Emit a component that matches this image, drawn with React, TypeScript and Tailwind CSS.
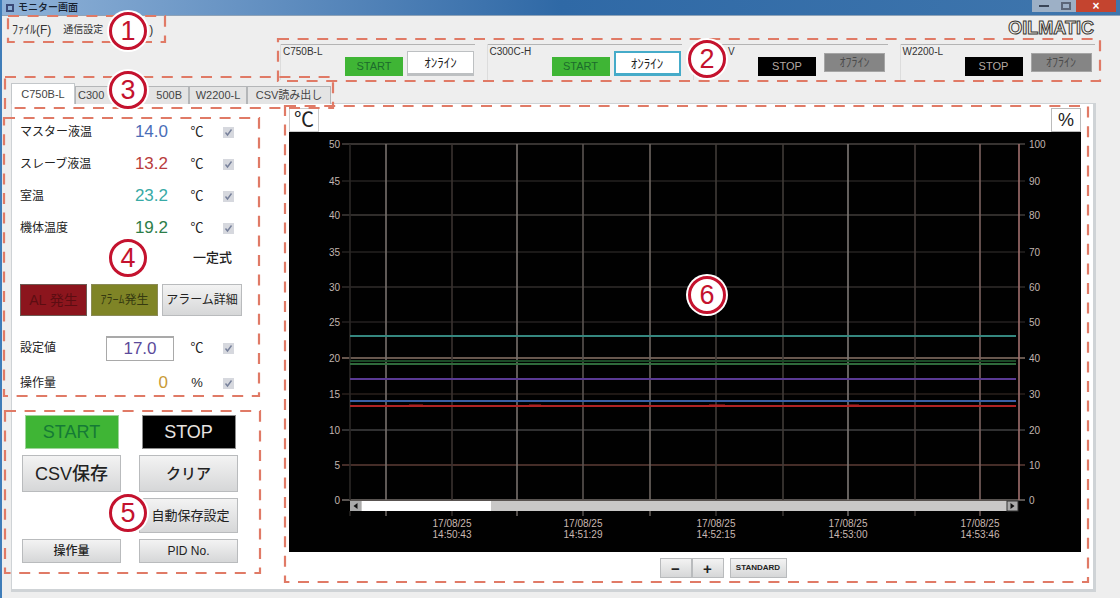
import type { ReactNode } from "react";

function Outline({ className, color = "#e07a66" }: { className: string; color?: string }) {
  return (
    <svg aria-hidden="true" className={`pointer-events-none absolute z-10 overflow-visible ${className}`}>
      <rect width="100%" height="100%" fill="none" stroke={color} strokeWidth="2.2" strokeDasharray="11 8.6" />
    </svg>
  );
}

function Badge({ n, className }: { n: number; className: string }) {
  return (
    <span
      className={`absolute z-20 flex size-[38px] items-center justify-center rounded-full border-[3px] border-[#c4122e] bg-white text-[27px] leading-none text-[#c4122e] ring-2 ring-white ${className}`}
    >
      {n}
    </span>
  );
}

const units = [
  { name: "C750B-L", on: true, focus: false, inset: false },
  { name: "C300C-H", on: true, focus: true, inset: false },
  { name: "V", on: false, focus: false, inset: true },
  { name: "W2200-L", on: false, focus: false, inset: false },
];

function Unit({ name, on, focus, inset }: { name: string; on: boolean; focus: boolean; inset: boolean }) {
  return (
    <section className="relative flex h-9 items-start border-l border-[#dcdcdc] pl-[64px]">
      <div className="absolute top-0 left-0 h-px w-[194px] bg-[#b4b4b4]" />
      <h2 className={`absolute top-0.5 text-[10px] leading-3 text-[#333] ${inset ? "left-[34px]" : "left-0.5"}`}>{name}</h2>
      <button
        className={
          on
            ? "mt-[13px] h-[19px] w-[58px] bg-[#3fb535] text-[11px] leading-none text-[#1c6b2c]"
            : "mt-[13px] h-[19px] w-[58px] bg-black text-[11px] leading-none text-[#b5a9a2]"
        }
      >
        {on ? "START" : "STOP"}
      </button>
      {on ? (
        <button
          className={
            focus
              ? "mt-[7px] ml-1 h-[25px] w-[67px] border-2 border-b-[3px] border-[#45abc9] bg-white text-[13px] leading-none text-[#222]"
              : "mt-[7px] ml-1 h-[25px] w-[67px] border border-b-[3px] border-[#bdc0c2] bg-white text-[13px] leading-none text-[#222]"
          }
        >
          ｵﾝﾗｲﾝ
        </button>
      ) : (
        <button className="mt-[9px] ml-2 h-[19px] w-[61px] border border-[#a5a5a5] bg-[#858585] text-[12px] leading-none text-[#4c4c4c]">
          ｵﾌﾗｲﾝ
        </button>
      )}
    </section>
  );
}

function Check({ label }: { label: string }) {
  return (
    <label className="relative ml-auto flex size-[11px] items-center justify-center">
      <input
        type="checkbox"
        defaultChecked
        aria-label={label}
        className="size-[11px] appearance-none bg-[#d6d8de]"
      />
      <svg viewBox="0 0 11 11" className="pointer-events-none absolute inset-0 size-full">
        <path d="M2.5 5.5 L4.5 8 L8.5 2.5" fill="none" stroke="#77809a" strokeWidth="1.4" />
      </svg>
    </label>
  );
}

function Row({ label, unit, children }: { label: string; unit: string; children: ReactNode }) {
  return (
    <div className="flex h-8 items-center text-[13px] text-[#222]">
      <span className="w-20 text-[12px] whitespace-nowrap">{label}</span>
      <span className="flex w-[68px] justify-end">{children}</span>
      <span className="ml-[19px] w-5 text-center">{unit}</span>
      <Check label={label} />
    </div>
  );
}

const readings = [
  { label: "マスター液温", value: "14.0", tone: "text-[#4a6db8]" },
  { label: "スレーブ液温", value: "13.2", tone: "text-[#b83c3c]" },
  { label: "室温", value: "23.2", tone: "text-[#38aaa6]" },
  { label: "機体温度", value: "19.2", tone: "text-[#2c7d48]" },
];

const raised = "border border-[#b9bbbd] bg-linear-to-b from-[#f3f3f3] to-[#d6d7d8] text-[#222]";

const gridX = [
  { x: 61, c: "#2b2826" },
  { x: 97, c: "#77706c" },
  { x: 163, c: "#3a3330" },
  { x: 228, c: "#77706c" },
  { x: 294, c: "#5a5451" },
  { x: 361, c: "#6e6661" },
  { x: 427, c: "#403b38" },
  { x: 494, c: "#403b38" },
  { x: 559, c: "#7d7875" },
  { x: 626, c: "#443b39" },
  { x: 691, c: "#7b6360" },
];
const gridY = [
  { y: 12, c: "#4a4542" },
  { y: 49, c: "#242221" },
  { y: 83, c: "#403c3a" },
  { y: 120, c: "#242221" },
  { y: 155, c: "#302c2b" },
  { y: 190, c: "#242020" },
  { y: 226, c: "#8a7568" },
  { y: 262, c: "#2a201c" },
  { y: 298, c: "#404042" },
  { y: 333, c: "#5c3d36" },
  { y: 368, c: "#77706c" },
];
const series = [
  { y: 204, c: "#35877f" },
  { y: 229, c: "#1b4a27" },
  { y: 232, c: "#2f6a3c" },
  { y: 247, c: "#5a3a94" },
  { y: 269, c: "#3a5fa5" },
  { y: 274, c: "#b02323" },
];
const times = [
  { x: 163, t: "14:50:43" },
  { x: 294, t: "14:51:29" },
  { x: 427, t: "14:52:15" },
  { x: 559, t: "14:53:00" },
  { x: 691, t: "14:53:46" },
];

function Chart() {
  return (
    <svg viewBox="0 0 792 420" className="block w-full" role="img" aria-label="温度グラフ">
      <rect width="792" height="420" fill="#010101" />
      {gridY.map((g, i) => (
        <g key={g.y}>
          <line x1="53" x2="736" y1={g.y} y2={g.y} stroke={g.c} strokeWidth="1.6" />
          <text x="51" y={g.y + 4} textAnchor="end" fontSize="10" fill="#c2b5b0">{50 - i * 5}</text>
          <text x="740" y={g.y + 4} fontSize="10" fill="#c2b5b0">{100 - i * 10}</text>
        </g>
      ))}
      {gridX.map((g) => (
        <g key={g.x}>
          <line x1={g.x} x2={g.x} y1="12" y2="368" stroke={g.c} strokeWidth="1.6" />
          <line x1={g.x} x2={g.x} y1="379" y2="384" stroke={g.c} strokeWidth="1.4" />
        </g>
      ))}
      <line x1="730" x2="730" y1="12" y2="368" stroke="#a0706e" strokeWidth="1.6" />
      {series.map((s) => (
        <line key={s.y} x1="61" x2="727" y1={s.y} y2={s.y} stroke={s.c} strokeWidth="2" />
      ))}
      <path d="M120 273 h14 M240 273 h12 M420 273 h16 M560 273 h10" stroke="#b02323" fill="none" />
      <rect x="61" y="369" width="668" height="10" fill="#c9c8c7" />
      <rect x="73" y="369" width="129" height="10" fill="#fff" />
      <rect x="61" y="369" width="11" height="10" fill="#aaa" />
      <path d="M68.500 371 v6 l-4 -3 z" fill="#111" />
      <rect x="718" y="369" width="11" height="10" fill="#aaa" stroke="#333" strokeWidth="1" />
      <path d="M721.500 371 v6 l4 -3 z" fill="#111" />
      {times.map((t) => (
        <g key={t.x} fontSize="10" fill="#c9b8b2" textAnchor="middle">
          <text x={t.x} y="395">17/08/25</text>
          <text x={t.x} y="406">{t.t}</text>
        </g>
      ))}
    </svg>
  );
}

export default function App() {
  return (
    <div className="flex min-h-screen flex-col border-l-2 border-[#3f7db9] bg-[#eeeeee] font-['Liberation_Sans','Noto_Sans_CJK_JP',sans-serif]">
      <header className="flex h-4 items-center border-b border-[#8fa3b8] bg-linear-to-r from-[#8fb2d8] via-[#2f69a6] to-[#3f76ad]">
        <span className="ml-1 size-2 border-2 border-[#3a4a78]" />
        <h1 className="ml-1 text-[10px] leading-none font-medium text-[#16202e]">モニター画面</h1>
        <div className="mr-1 ml-auto flex h-3 self-start">
          <button aria-label="最小化" className="flex w-6 items-center justify-center bg-[#9db0c6]">
            <span className="h-0.5 w-2.5 bg-[#3b4658]" />
          </button>
          <button aria-label="最大化" className="flex w-5 items-center justify-center bg-[#9db0c6]">
            <span className="h-2 w-2.5 border-2 border-[#5b6678]" />
          </button>
          <button aria-label="閉じる" className="flex w-10 items-center justify-center bg-[#c4442f] text-[12px] leading-none font-bold text-white">
            ×
          </button>
        </div>
      </header>

      <div className="relative flex h-[27px] items-start pl-2.5">
        <nav className="flex pt-1.5 text-[12px] leading-4 text-[#333]">
          <button>ﾌｧｲﾙ(F)</button>
          <button className="ml-3 text-[10px]">通信設定</button>
          <button className="ml-[46px]">)</button>
        </nav>
        <span className="mr-[26px] ml-auto pt-0.5 text-[18px] leading-5 font-bold text-[#f4f3ee] [-webkit-text-stroke:1px_#3a3833]">
          OILMATIC
        </span>
        <Outline className="top-0 left-1.5 h-[26px] w-[157px]" />
        <Badge n={1} className="-top-1 left-[107px]" />
      </div>

      <div className="relative ml-[278px] grid grid-cols-4 gap-0 pt-px pr-[14px]">
        {units.map((u) => (
          <Unit key={u.name} {...u} />
        ))}
        <Outline className="-top-1 -left-0.5 h-[42px] w-[calc(100%-18px)]" />
        <Badge n={2} className="-top-[3px] left-[408px]" />
      </div>

      <div className="relative z-10 -mb-px ml-[9px] flex h-6 items-end pt-1 text-[11px] leading-none text-[#444]" role="tablist">
        <button role="tab" aria-selected="true" className="h-[21px] w-16 border border-b-0 border-[#c3c7ca] bg-white">C750B-L</button>
        <button role="tab" className="h-[18px] w-14 border border-b-0 border-[#b4b6b8] bg-[#e4e4e4] pl-0.5 text-left">C300</button>
        <button role="tab" className="h-[18px] w-[58px] border border-b-0 border-[#b4b6b8] bg-[#e4e4e4] pr-1.5 text-right">500B</button>
        <button role="tab" className="h-[18px] w-[58px] border border-b-0 border-[#b4b6b8] bg-[#e4e4e4]">W2200-L</button>
        <button role="tab" className="h-[18px] w-[84px] border border-b-0 border-[#b4b6b8] bg-[#e4e4e4] whitespace-nowrap">CSV読み出し</button>
        <Outline className="-top-[3px] -left-1.5 h-[31px] w-[328px]" />
        <Badge n={3} className="-top-[9px] left-[98px]" />
      </div>

      <main className="mr-6 mb-1.5 ml-[9px] flex flex-1 items-start border border-r-[3px] border-b-[3px] border-[#cfd3d6] bg-white">
        <div className="w-[273px] shrink-0">
          <section className="relative pt-3 pr-[51px] pb-4 pl-2">
            {readings.map((r) => (
              <Row key={r.label} label={r.label} unit="℃">
                <output className={`text-[17px] ${r.tone}`}>{r.value}</output>
              </Row>
            ))}
            <p className="mr-0.5 mt-1.5 text-right text-[13px] leading-4 font-medium text-[#222]">一定式</p>
            <div className="-mr-2 mt-[18px] flex justify-between">
              <button className="h-8 w-[67px] border border-[#6d5a52] bg-[#8c151d] text-[14px] leading-none text-[#5c0d12]">AL 発生</button>
              <button className="h-8 w-[67px] border border-[#8a8a55] bg-[#7f8426] text-[12px] leading-none text-[#363a10]">ｱﾗｰﾑ発生</button>
              <button className={`h-8 w-20 text-[12px] leading-none whitespace-nowrap ${raised}`}>アラーム詳細</button>
            </div>
            <div className="mt-4">
              <Row label="設定値" unit="℃">
                <input
                  aria-label="設定値"
                  defaultValue="17.0"
                  className="-mr-1.5 h-[25px] w-[68px] shrink-0 border border-t-2 border-[#a9a9a9] bg-white text-center text-[17px] leading-none text-[#5b4a9a]"
                />
              </Row>
            </div>
            <div className="mt-[3px]">
              <Row label="操作量" unit="%">
                <output className="text-[17px] text-[#c99a35]">0</output>
              </Row>
            </div>
            <Outline className="top-3.5 -left-2 h-[278px] w-[255px]" />
            <Badge n={4} className="top-[135px] left-[97px]" />
          </section>

          <section className="relative mt-0 grid w-[238px] grid-cols-2 gap-x-[18px] gap-y-[6px] pl-2.5 pr-3">
            <button className="mx-auto h-[34px] w-[94px] border border-[#9fd49a] bg-[#3fb535] text-[18px] leading-none text-[#157a35]">START</button>
            <button className="mx-auto h-[34px] w-[94px] border border-[#8d8d8d] bg-black text-[18px] leading-none text-[#e8e4e0]">STOP</button>
            <button className={`h-[37px] text-[18px] leading-none font-medium ${raised}`}>CSV保存</button>
            <button className={`h-[37px] text-[15px] leading-none font-medium ${raised}`}>クリア</button>
            <button className={`col-start-2 h-[35px] pl-1 text-[13px] leading-none whitespace-nowrap ${raised}`}>自動保存設定</button>
            <button className={`h-6 text-[12px] leading-none font-medium ${raised}`}>操作量</button>
            <button className={`h-6 text-[12px] leading-none ${raised}`}>PID No.</button>
            <Outline className="-top-1 -left-[7px] h-[162px] w-[255px]" />
            <Badge n={5} className="top-[79px] left-[97px]" />
          </section>
        </div>

        <section className="relative min-w-0 flex-1 pt-1 pr-3 pl-1">
          <div className="flex justify-between">
            <span className="flex h-6 w-[30px] items-center justify-center border border-[#ccc] text-[20px] leading-none text-[#222]">℃</span>
            <span className="flex h-6 w-[30px] items-center justify-center border border-[#bbb] text-[18px] leading-none text-[#222]">%</span>
          </div>
          <Chart />
          <div className="mt-1.5 flex justify-center pl-[76px]">
            <button aria-label="縮小" className={`h-5 w-8 text-[15px] leading-none font-bold ${raised}`}>−</button>
            <button aria-label="拡大" className={`h-5 w-8 text-[15px] leading-none font-bold ${raised}`}>+</button>
            <button className={`ml-1.5 h-5 w-[57px] text-[8px] leading-none font-bold ${raised}`}>STANDARD</button>
          </div>
          <Outline className="top-0.5 left-0 h-[476px] w-[calc(100%-5px)]" />
          <Badge n={6} className="top-[172px] left-[403px]" />
        </section>
      </main>
    </div>
  );
}
